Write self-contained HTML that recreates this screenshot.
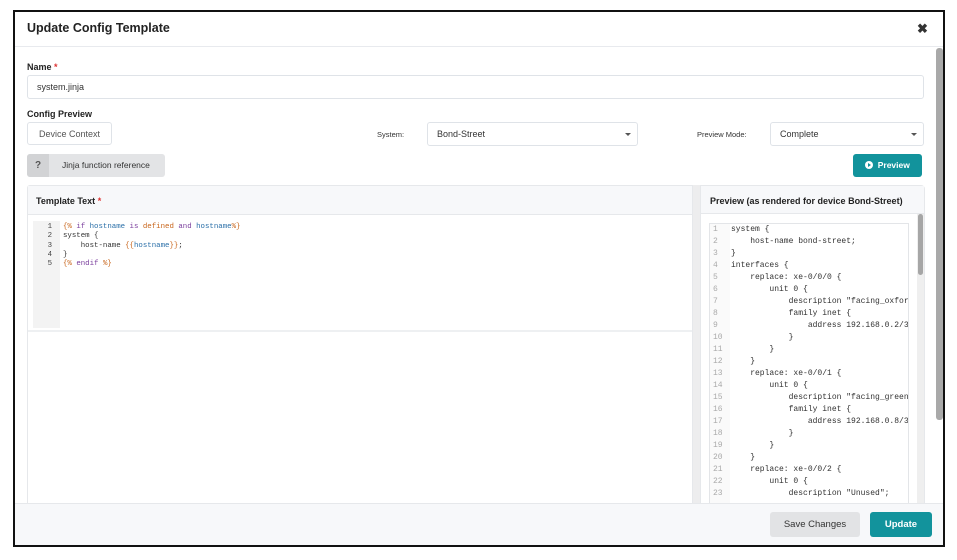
<!DOCTYPE html>
<html><head><meta charset="utf-8"><style>
*{box-sizing:border-box;margin:0;padding:0}
body{width:957px;height:560px;background:#fff;font-family:"Liberation Sans",sans-serif;position:relative;overflow:hidden;color:#222}
.a{position:absolute;white-space:nowrap}
.modal{left:13px;top:10px;width:932px;height:537px;border:2px solid #111;background:#fff;overflow:hidden}
.lbl{font-size:9px;font-weight:bold;color:#222}
.inp{border:1px solid #dfe3e8;border-radius:3px;background:#fff;font-size:9px;color:#333}
.mono{font-family:"Liberation Mono",monospace;font-size:7.4px;line-height:9.3px;white-space:pre}
.pm{font-family:"Liberation Mono",monospace;font-size:8px;line-height:12px;white-space:pre;color:#333}
.k{color:#7a3e9d}.o{color:#c8651b}.b{color:#2a6fa8}
.caret{width:0;height:0;border-left:3px solid transparent;border-right:3px solid transparent;border-top:3px solid #555}
</style></head><body>
<div class="a modal"></div>
<div class="a" style="left:15px;top:12px;width:928px;height:35px;border-bottom:1px solid #e8eaee"></div>
<div class="a" style="left:27px;top:21px;font-size:12.5px;font-weight:bold;color:#222">Update Config Template</div>
<div class="a" style="left:917px;top:21px;font-size:13px;font-weight:bold;color:#333">✖</div>
<div class="a" style="left:936px;top:48px;width:7px;height:372px;background:#a9a9a9;border-radius:3px"></div>

<div class="a lbl" style="left:27px;top:62px">Name <span style="color:#d33">*</span></div>
<div class="a inp" style="left:27px;top:75px;width:897px;height:24px;padding:6px 9px">system.jinja</div>
<div class="a lbl" style="left:27px;top:109px">Config Preview</div>
<div class="a inp" style="left:27px;top:122px;width:85px;height:23px;padding:6px 0;text-align:center;color:#555">Device Context</div>
<div class="a" style="left:377px;top:130px;font-size:7.5px;color:#333">System:</div>
<div class="a inp" style="left:427px;top:122px;width:211px;height:24px;padding:6px 9px">Bond-Street</div>
<div class="a caret" style="left:625px;top:133px"></div>
<div class="a" style="left:697px;top:130px;font-size:7.5px;color:#333">Preview Mode:</div>
<div class="a inp" style="left:770px;top:122px;width:154px;height:24px;padding:6px 9px">Complete</div>
<div class="a caret" style="left:911px;top:133px"></div>

<div class="a" style="left:27px;top:154px;width:138px;height:23px;background:#e3e4e6;border-radius:3px;overflow:hidden">
<div class="a" style="left:0;top:0;width:22px;height:23px;background:#d2d3d5;font-size:10px;font-weight:bold;color:#555;text-align:center;line-height:23px">?</div>
<div class="a" style="left:35px;top:6px;font-size:8.5px;color:#333">Jinja function reference</div></div>
<div class="a" style="left:853px;top:154px;width:69px;height:23px;background:#12939c;border-radius:3px;color:#fff;font-size:8.5px;font-weight:bold;line-height:23px;padding-left:12px">
<span style="display:inline-block;width:8px;height:8px;border-radius:50%;background:#fff;vertical-align:-1px;position:relative"><span style="position:absolute;left:3px;top:2px;border-left:3px solid #12939c;border-top:2px solid transparent;border-bottom:2px solid transparent"></span></span>&nbsp; Preview</div>

<!-- template panel -->
<div class="a" style="left:27px;top:185px;width:666px;height:330px;border:1px solid #e6e8eb;border-radius:3px 0 0 0;background:#fff"></div>
<div class="a" style="left:28px;top:186px;width:664px;height:29px;background:#f7f8fa;border-bottom:1px solid #e6e8eb"></div>
<div class="a lbl" style="left:36px;top:196px">Template Text <span style="color:#d33">*</span></div>
<div class="a" style="left:28px;top:330px;width:664px;height:2px;background:#eef0f2"></div>
<div class="a" style="left:33px;top:221px;width:27px;height:107px;background:#f3f3f3"></div>
<div class="a mono" style="left:44px;top:223px;color:#444;text-align:right;width:8px">1
2
3
4
5</div>
<div class="a mono" style="left:63px;top:223px;color:#333"><span class="o">{%</span> <span class="k">if</span> <span class="b">hostname</span> <span class="k">is</span> <span class="o">defined</span> <span class="k">and</span> <span class="b">hostname</span><span class="o">%}</span>
system {
    host-name <span class="o">{{</span><span class="b">hostname</span><span class="o">}}</span>;
}
<span class="o">{%</span> <span class="k">endif</span> <span class="o">%}</span></div>
<div class="a" style="left:693px;top:185px;width:8px;height:320px;background:#ededee"></div>

<!-- preview panel -->
<div class="a" style="left:700px;top:185px;width:225px;height:330px;border:1px solid #e6e8eb;border-radius:0 4px 0 0;background:#fff"></div>
<div class="a" style="left:701px;top:186px;width:223px;height:28px;background:#f7f8fa;border-bottom:1px solid #e6e8eb"></div>
<div class="a lbl" style="left:710px;top:196px">Preview (as rendered for device Bond-Street)</div>
<div class="a" style="left:709px;top:223px;width:200px;height:290px;border:1px solid #e3e5e8;overflow:hidden">
<div class="a" style="left:0;top:0;width:20px;height:300px;background:#fafafa"></div>
<div class="a pm" style="left:3px;top:0px;color:#aaa">1
2
3
4
5
6
7
8
9
10
11
12
13
14
15
16
17
18
19
20
21
22
23</div>
<div class="a pm" style="left:21px;top:0px">system {
    host-name bond-street;
}
interfaces {
    replace: xe-0/0/0 {
        unit 0 {
            description "facing_oxford";
            family inet {
                address 192.168.0.2/31;
            }
        }
    }
    replace: xe-0/0/1 {
        unit 0 {
            description "facing_greenpark";
            family inet {
                address 192.168.0.8/31;
            }
        }
    }
    replace: xe-0/0/2 {
        unit 0 {
            description "Unused";</div></div>
<div class="a" style="left:917px;top:214px;width:7px;height:290px;background:#efefef"></div>
<div class="a" style="left:918px;top:214px;width:5px;height:61px;background:#a6a6a6;border-radius:3px"></div>

<!-- footer -->
<div class="a" style="left:15px;top:503px;width:928px;height:42px;background:#f7f8fa;border-top:1px solid #e6e8eb"></div>
<div class="a" style="left:770px;top:512px;width:90px;height:25px;background:#e2e3e5;border-radius:3px;font-size:9.5px;color:#333;text-align:center;line-height:25px">Save Changes</div>
<div class="a" style="left:870px;top:512px;width:62px;height:25px;background:#12939c;border-radius:3px;font-size:9.5px;font-weight:bold;color:#fff;text-align:center;line-height:25px">Update</div>
</body></html>
